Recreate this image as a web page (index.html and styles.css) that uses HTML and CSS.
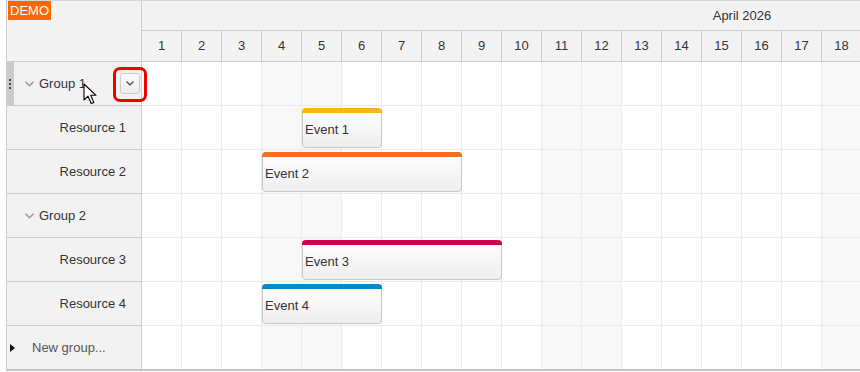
FILE: index.html
```html
<!DOCTYPE html>
<html>
<head>
<meta charset="utf-8">
<link rel="stylesheet" href="styles.css">
</head>
<body>
<div class="scheduler">
  <div class="corner"><span class="demo">DEMO</span></div>
  <div class="timeheader">
    <div class="month"><div class="month-cell">April 2026</div></div>
    <div class="days">
      <div class="day">1</div><div class="day">2</div><div class="day">3</div><div class="day">4</div><div class="day">5</div><div class="day">6</div><div class="day">7</div><div class="day">8</div><div class="day">9</div><div class="day">10</div><div class="day">11</div><div class="day">12</div><div class="day">13</div><div class="day">14</div><div class="day">15</div><div class="day">16</div><div class="day">17</div><div class="day">18</div>
    </div>
  </div>
  <div class="rowheaders">
    <div class="rh group hover">
      <span class="handle"><i></i><i></i><i></i></span>
      <svg class="chev" width="9" height="6" viewBox="0 0 9 6"><polyline points="0.5,0.8 4.5,4.8 8.5,0.8" fill="none" stroke="#999" stroke-width="1.5"/></svg>
      <span class="label">Group 1</span>
      <span class="menu">
        <svg width="8" height="5" viewBox="0 0 8 5"><polyline points="0.5,0.5 4,4 7.5,0.5" fill="none" stroke="#444" stroke-width="1.2"/></svg>
        <span class="highlight"></span>
      </span>
      <svg class="cursor" width="15" height="23" viewBox="0 0 15 23"><path d="M1,1 L1,17 L5,13.2 L8.2,20.5 L10.8,19.4 L7.7,12.3 L13,12.3 Z" fill="#fff" stroke="#000" stroke-width="1.1" stroke-linejoin="round"/></svg>
    </div>
    <div class="rh resource">Resource 1</div>
    <div class="rh resource">Resource 2</div>
    <div class="rh group">
      <svg class="chev" width="9" height="6" viewBox="0 0 9 6"><polyline points="0.5,0.8 4.5,4.8 8.5,0.8" fill="none" stroke="#999" stroke-width="1.5"/></svg>
      <span class="label">Group 2</span>
    </div>
    <div class="rh resource">Resource 3</div>
    <div class="rh resource">Resource 4</div>
    <div class="rh newgroup"><span class="tri"></span><span class="label">New group...</span></div>
  </div>
  <div class="body">
    <div class="col" style="grid-column:1"></div>
    <div class="col" style="grid-column:2"></div>
    <div class="col" style="grid-column:3"></div>
    <div class="col we" style="grid-column:4"></div>
    <div class="col we" style="grid-column:5"></div>
    <div class="col" style="grid-column:6"></div>
    <div class="col" style="grid-column:7"></div>
    <div class="col" style="grid-column:8"></div>
    <div class="col" style="grid-column:9"></div>
    <div class="col" style="grid-column:10"></div>
    <div class="col we" style="grid-column:11"></div>
    <div class="col we" style="grid-column:12"></div>
    <div class="col" style="grid-column:13"></div>
    <div class="col" style="grid-column:14"></div>
    <div class="col" style="grid-column:15"></div>
    <div class="col" style="grid-column:16"></div>
    <div class="col" style="grid-column:17"></div>
    <div class="col we" style="grid-column:18"></div>
    <div class="rowline" style="grid-row:1"></div>
    <div class="rowline" style="grid-row:2"></div>
    <div class="rowline" style="grid-row:3"></div>
    <div class="rowline" style="grid-row:4"></div>
    <div class="rowline" style="grid-row:5"></div>
    <div class="rowline" style="grid-row:6"></div>
    <div class="rowline" style="grid-row:7"></div>
    <div class="event" style="grid-row:2; grid-column:5 / span 2"><div class="bar" style="background:#fbb614"></div><div class="text">Event 1</div></div>
    <div class="event" style="grid-row:3; grid-column:4 / span 5"><div class="bar" style="background:#f37021"></div><div class="text">Event 2</div></div>
    <div class="event" style="grid-row:5; grid-column:5 / span 5"><div class="bar" style="background:#cc004c"></div><div class="text">Event 3</div></div>
    <div class="event" style="grid-row:6; grid-column:4 / span 3"><div class="bar" style="background:#0089d1"></div><div class="text">Event 4</div></div>
  </div>
</div>
</body>
</html>
```
FILE: styles.css
```css
html, body {
  margin: 0;
  padding: 0;
  background: #fff;
  overflow: hidden;
}
body {
  font-family: "Liberation Sans", Arial, sans-serif;
  font-size: 13px;
  color: #333;
}
.scheduler {
  margin-left: 6px;
  width: 854px;
  overflow: hidden;
  border-left: 1px solid #ccc;
  border-top: 1px solid #d6d6d6;
  border-bottom: 2px solid #c4c4c4;
  display: grid;
  grid-template-columns: 135px 1fr;
  grid-template-rows: 61px 307px;
}
.corner {
  background: #f3f3f3;
  border-right: 1px solid #ccc;
  border-bottom: 1px solid #ccc;
  position: relative;
}
.demo {
  display: inline-block;
  margin-left: 1px;
  background: #ff6600;
  color: #fff;
  font-size: 13px;
  line-height: 19px;
  padding: 0 2px;
}
.timeheader {
  background: #f3f3f3;
  overflow: hidden;
  border-bottom: 1px solid #ccc;
}
.month {
  height: 29px;
  border-bottom: 1px solid #ccc;
  overflow: hidden;
}
.month-cell {
  width: 1200px;
  height: 29px;
  line-height: 29px;
  text-align: center;
}
.days {
  display: flex;
  height: 30px;
}
.day {
  flex: 0 0 40px;
  box-sizing: border-box;
  border-right: 1px solid #ccc;
  text-align: center;
  line-height: 30px;
}
.rowheaders {
  display: flex;
  flex-direction: column;
  background: #f2f2f2;
  border-right: 1px solid #ccc;
  position: relative;
  z-index: 2;
}
.rh {
  height: 43px;
  flex: 0 0 43px;
  border-bottom: 1px solid #ccc;
  display: flex;
  align-items: center;
  position: relative;
}
.group {
  padding-left: 18px;
}
.chev {
  margin-right: 5px;
  margin-top: 1px;
}
.resource {
  justify-content: flex-end;
  padding-right: 15px;
}
.newgroup {
  padding-left: 3px;
  border-bottom: none;
}
.tri {
  width: 0;
  height: 0;
  border-top: 4px solid transparent;
  border-bottom: 4px solid transparent;
  border-left: 5px solid #111;
  margin-right: 17px;
}
.newgroup .label {
  color: #555;
}
.handle {
  position: absolute;
  left: -1px;
  top: 0;
  bottom: 0;
  width: 8px;
  background: #cbcbcb;
  display: flex;
  flex-direction: column;
  align-items: center;
  justify-content: center;
  gap: 2px;
}
.handle i {
  display: block;
  width: 2px;
  height: 2px;
  background: #444;
}
.menu {
  position: absolute;
  left: 113px;
  top: 11px;
  width: 18px;
  height: 19px;
  border: 1px solid #ccc;
  border-radius: 3px;
  background: linear-gradient(#fbfbfb, #eee);
  display: flex;
  align-items: center;
  justify-content: center;
}
.highlight {
  position: absolute;
  left: -8px;
  top: -7px;
  width: 28px;
  height: 29px;
  border: 3px solid #ee0000;
  border-radius: 7px;
}
.cursor {
  position: absolute;
  left: 76px;
  top: 21px;
}
.body {
  display: grid;
  grid-template-columns: repeat(18, 40px);
  grid-template-rows: repeat(7, 44px);
  overflow: hidden;
}
.col {
  grid-row: 1 / -1;
  box-sizing: border-box;
  border-right: 1px solid #ebebeb;
}
.col.we {
  background: #f8f8f8;
}
.rowline {
  grid-column: 1 / -1;
  box-sizing: border-box;
  border-bottom: 1px solid #ebebeb;
}
.event {
  align-self: start;
  margin-top: 2px;
  height: 40px;
  box-sizing: border-box;
  border: 1px solid #c8c8c8;
  border-radius: 4px;
  background: linear-gradient(#fff, #eeeeee);
  display: flex;
  flex-direction: column;
}
.bar {
  height: 5px;
  margin: -1px -1px 0;
  flex: 0 0 5px;
  border-radius: 4px 4px 0 0;
}
.event .text {
  flex: 1;
  display: flex;
  align-items: center;
  padding-left: 2px;
  padding-bottom: 2px;
  color: #333;
}
```
